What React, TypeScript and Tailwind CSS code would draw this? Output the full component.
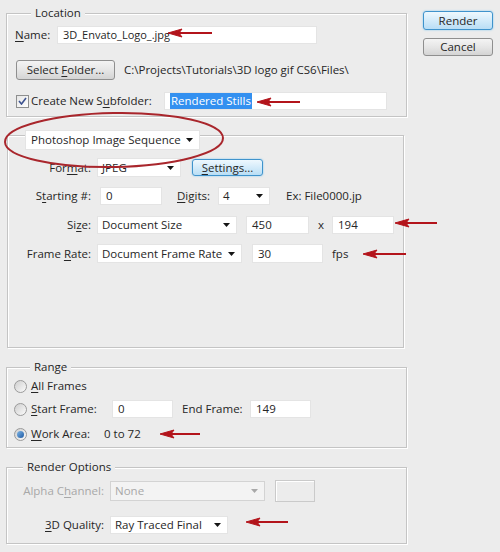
import React from "react";

type Kids = { children?: React.ReactNode; className?: string };

const U = ({ children }: Kids) => (
  <span className="underline decoration-1 underline-offset-[2px]">{children}</span>
);

const Caret = ({ dim }: { dim?: boolean }) => (
  <svg width="7" height="4" viewBox="0 0 7 4" className="shrink-0">
    <path d="M0 0h7L3.5 4z" fill={dim ? "#a8a8a8" : "#151515"} />
  </svg>
);

function Dropdown({ children, className = "", dim }: Kids & { dim?: boolean }) {
  return (
    <div
      className={`flex items-center justify-between border pl-[4px] pr-[6px] ${
        dim ? "bg-[#f3f3f3] border-[#d3d3d3] text-[#a8a8a8]" : "bg-white border-[#e4e4e4]"
      } ${className}`}
    >
      <span className="whitespace-nowrap">{children}</span>
      <Caret dim={dim} />
    </div>
  );
}

function Field({ children, className = "" }: Kids) {
  return (
    <div className={`flex items-center bg-white border border-[#e4e4e4] pl-[5px] whitespace-nowrap ${className}`}>
      {children}
    </div>
  );
}

function Button({ children, className = "", blue }: Kids & { blue?: boolean }) {
  return (
    <div
      className={`flex items-center justify-center rounded-[3px] border whitespace-nowrap ${
        blue
          ? "border-[#3f93cc] bg-gradient-to-b from-[#eef8fe] to-[#b9def5] shadow-[0_0_2px_#7cc4f0]"
          : "border-[#8f8f8f] bg-gradient-to-b from-[#f4f4f4] via-[#e6e6e6] to-[#d4d4d4]"
      } ${className}`}
    >
      <span>{children}</span>
    </div>
  );
}

function Radio({ on }: { on?: boolean }) {
  return (
    <div className="flex h-[13px] w-[13px] shrink-0 items-center justify-center rounded-full border border-[#9a9a9a] bg-gradient-to-br from-[#cfcfcf] to-[#fbfbfb]">
      {on && <div className="h-[7px] w-[7px] rounded-full bg-gradient-to-br from-[#7fb6e6] to-[#1c5aa3]" />}
    </div>
  );
}

function Group({ title, children, className = "" }: Kids & { title: string }) {
  return (
    <div className={`flex flex-col border border-[#c4c4c4] shadow-[inset_1px_1px_0_#fff,1px_1px_0_#fff] ${className}`}>
      <div className="-mt-[9px] ml-[16px] h-[16px] self-start bg-[#ececec] px-[4px] leading-[16px]">{title}</div>
      {children}
    </div>
  );
}

function Arrow({ tip, tail, y }: { tip: number; tail: number; y: number }) {
  return (
    <g fill="#b3141b" stroke="#b3141b">
      <line x1={tip + 10} y1={y} x2={tail} y2={y} strokeWidth="2" />
      <path d={`M${tip} ${y}L${tip + 14} ${y - 4}L${tip + 11} ${y}L${tip + 14} ${y + 4}z`} strokeWidth="1" />
    </g>
  );
}

export default function App() {
  return (
    <div className="relative flex h-[552px] w-[500px] overflow-hidden bg-[#ececec] pl-[6px] font-['Open_Sans',sans-serif] text-[11.5px] leading-[16px] text-[#262626]">
      <div className="flex w-[401px] flex-col">
        <Group title="Location" className="mt-[13px] pb-[6px] pl-[8px]">
          <div className="mt-[5px] flex h-[18px] items-center">
            <span className="w-[42px]">
              <U>N</U>ame:
            </span>
            <Field className="h-[18px] w-[260px] text-[11px]">3D_Envato_Logo_.jpg</Field>
          </div>
          <div className="mt-[16px] flex h-[20px] items-center">
            <Button className="ml-[1px] h-[20px] w-[99px]">
              Select <U>F</U>older...
            </Button>
            <span className="ml-[9px] whitespace-nowrap">C:\Projects\Tutorials\3D logo gif CS6\Files\</span>
          </div>
          <div className="mt-[12px] flex h-[18px] items-center">
            <div className="ml-[1px] flex h-[13px] w-[13px] items-center justify-center border border-[#8e8f8f] bg-gradient-to-br from-[#e6e6e6] to-white">
              <svg width="9" height="8" viewBox="0 0 9 8">
                <path d="M1 4l2.5 3L8 1" fill="none" stroke="#3d5390" strokeWidth="1.6" />
              </svg>
            </div>
            <span className="ml-[2px] w-[133px] whitespace-nowrap">
              Create New S<U>u</U>bfolder:
            </span>
            <Field className="h-[18px] w-[223px] pl-[3px]">
              <span className="bg-[#3390f0] px-[1px] text-white">Rendered Stills</span>
            </Field>
          </div>
        </Group>

        <div className="ml-[1px] mt-[18px] flex h-[213px] w-[397px] flex-col border border-[#c4c4c4] shadow-[inset_1px_1px_0_#fff,1px_1px_0_#fff]">
          <Dropdown className="-mt-[6px] ml-[17px] h-[20px] w-[175px] pl-[5px]">Photoshop Image Sequence</Dropdown>
          <div className="mt-[8px] flex h-[19px] items-center">
            <span className="w-[83px] text-right">
              For<U>m</U>at:
            </span>
            <Dropdown className="ml-[6px] h-[19px] w-[84px]">JPEG</Dropdown>
            <Button blue className="ml-[11px] h-[17px] w-[71px]">
              <U>S</U>ettings...
            </Button>
          </div>
          <div className="mt-[10px] flex h-[18px] items-center">
            <span className="w-[83px] text-right">
              S<U>t</U>arting #:
            </span>
            <Field className="ml-[9px] h-[18px] w-[62px]">0</Field>
            <span className="ml-[15px] w-[41px]">
              <U>D</U>igits:
            </span>
            <Dropdown className="h-[18px] w-[52px]">4</Dropdown>
            <span className="ml-[16px] whitespace-nowrap">Ex: File0000.jp</span>
          </div>
          <div className="mt-[11px] flex h-[18px] items-center">
            <span className="w-[83px] text-right">
              Si<U>z</U>e:
            </span>
            <Dropdown className="ml-[6px] h-[18px] w-[140px]">Document Size</Dropdown>
            <Field className="ml-[9px] h-[18px] w-[63px]">450</Field>
            <span className="ml-[9px] w-[14px]">x</span>
            <Field className="h-[18px] w-[62px]">194</Field>
          </div>
          <div className="mt-[10px] flex h-[19px] items-center">
            <span className="w-[83px] text-right">
              Frame <U>R</U>ate:
            </span>
            <Dropdown className="ml-[6px] h-[19px] w-[145px]">Document Frame Rate</Dropdown>
            <Field className="ml-[10px] h-[19px] w-[71px]">30</Field>
            <span className="ml-[9px]">fps</span>
          </div>
        </div>

        <Group title="Range" className="mt-[19px] pb-[4px] pl-[7px]">
          <div className="mt-[2px] flex h-[18px] items-center">
            <Radio />
            <span className="ml-[4px]">
              <U>A</U>ll Frames
            </span>
          </div>
          <div className="mt-[5px] flex h-[18px] items-center">
            <Radio />
            <span className="ml-[4px] w-[81px]">
              <U>S</U>tart Frame:
            </span>
            <Field className="h-[18px] w-[61px]">0</Field>
            <span className="ml-[9px] w-[68px]">End Frame:</span>
            <Field className="h-[18px] w-[61px]">149</Field>
          </div>
          <div className="mt-[7px] flex h-[18px] items-center">
            <Radio on />
            <span className="ml-[4px] w-[73px]">
              <U>W</U>ork Area:
            </span>
            <span>0 to 72</span>
          </div>
        </Group>

        <Group title="Render Options" className="mt-[19px] pb-[9px]">
          <div className="mt-[5px] flex h-[22px] items-center">
            <span className="w-[97px] text-right text-[#a8a8a8]">
              Alpha C<U>h</U>annel:
            </span>
            <Dropdown dim className="ml-[6px] h-[20px] w-[155px]">
              None
            </Dropdown>
            <div className="ml-[10px] h-[22px] w-[40px] border border-[#cacaca] bg-[#ececec] shadow-[inset_1px_1px_0_#fff]" />
          </div>
          <div className="mt-[14px] flex h-[18px] items-center">
            <span className="w-[97px] text-right">
              <U>3</U>D Quality:
            </span>
            <Dropdown className="ml-[6px] h-[18px] w-[118px]">Ray Traced Final</Dropdown>
          </div>
        </Group>
      </div>

      <div className="ml-[16px] flex w-[70px] flex-col pt-[11px]">
        <Button blue className="h-[19px]">
          Render
        </Button>
        <Button className="mt-[8px] h-[18px]">Cancel</Button>
      </div>

      <svg className="pointer-events-none absolute inset-0" width="500" height="552" viewBox="0 0 500 552">
        <ellipse cx="114" cy="140" rx="109" ry="27" fill="none" stroke="#a9262c" strokeWidth="2" transform="rotate(-1 114 140)" />
        <Arrow tip={168} tail={212} y={33} />
        <Arrow tip={257} tail={300} y={102} />
        <Arrow tip={395} tail={437} y={223} />
        <Arrow tip={363} tail={406} y={254} />
        <Arrow tip={160} tail={200} y={434} />
        <Arrow tip={246} tail={288} y={522} />
      </svg>
    </div>
  );
}
